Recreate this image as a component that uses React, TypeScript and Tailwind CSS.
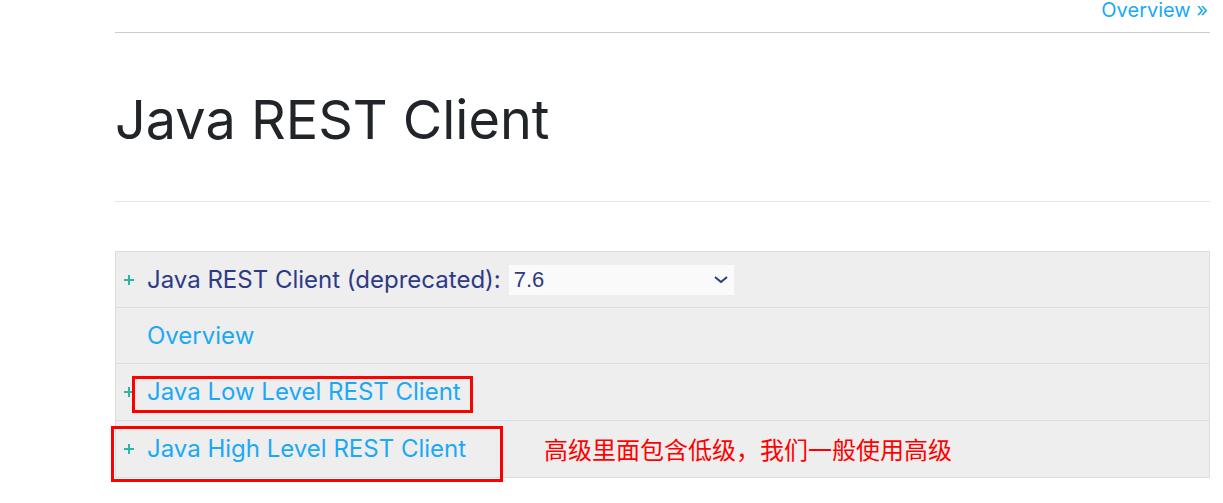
const Plus = () => (
  <svg viewBox="0 0 10 10" className="w-[10px] h-[10px] shrink-0" fill="none">
    <path d="M5 0v10M0 5h10" stroke="#2bb5a2" strokeWidth="2" />
  </svg>
);

const App = () => {
  return (
    <div className="w-[1223px] h-[503px] bg-white overflow-hidden font-['Inter','Noto_Sans',sans-serif]">
      <div className="ml-[115px] w-[1095px]">
        {/* top nav */}
        <div className="h-[33px] border-b border-[#cccccc] flex justify-end pr-[2px]">
          <a className="text-[20px] leading-[20px] text-[#1ba9f5]">Overview »</a>
        </div>

        <h1 className="mt-[55px] text-[54px] leading-[1.2] text-[#212529] font-normal">
          Java REST Client
        </h1>
        <div className="mt-[48px] border-t border-[#e5e5e5]" />

        <div className="relative mt-[49px]">
          <div className="border border-[#dddddd] bg-[#eeeeee] text-[24px]">
            <div className="h-[56px] flex items-center pl-[8px] pt-px border-b border-[#dddddd]">
              <Plus />
              <span className="ml-[13px] text-[#2d3a85]">Java REST Client (deprecated):</span>
              <div className="ml-[8px] w-[225px] h-[30px] bg-[#fafafa] flex items-center justify-between pl-[5px] pr-[6px] text-[22px] font-['Liberation_Sans',sans-serif] text-[#2d3a85]">
                <span>7.6</span>
                <svg viewBox="0 0 14 7" className="w-[14px] h-[7px]" fill="none">
                  <path d="M1 1l6 5 6-5" stroke="#2d3a85" strokeWidth="2" />
                </svg>
              </div>
            </div>
            <div className="h-[56px] flex items-center pl-[31px] pt-px border-b border-[#dddddd]">
              <a className="text-[#1ba9f5]">Overview</a>
            </div>
            <div className="h-[57px] flex items-center pl-[8px] pt-px border-b border-[#dddddd]">
              <Plus />
              <a className="ml-[13px] text-[#1ba9f5]">Java Low Level REST Client</a>
            </div>
            <div className="h-[56px] flex items-center pl-[8px] pt-px">
              <Plus />
              <a className="ml-[13px] text-[#1ba9f5]">Java High Level REST Client</a>
              <span className="ml-[78px] text-[24px] text-[#ff0000] font-['Noto_Sans_CJK_SC',sans-serif]">
                高级里面包含低级，我们一般使用高级
              </span>
            </div>
          </div>

          {/* red annotation boxes */}
          <div className="absolute left-[17px] top-[125px] w-[341px] h-[37px] border-[3px] border-[#ff0000]" />
          <div className="absolute left-[-4px] top-[175px] w-[392px] h-[56px] border-[3px] border-[#ff0000]" />
        </div>
      </div>
    </div>
  );
};

export default App;
